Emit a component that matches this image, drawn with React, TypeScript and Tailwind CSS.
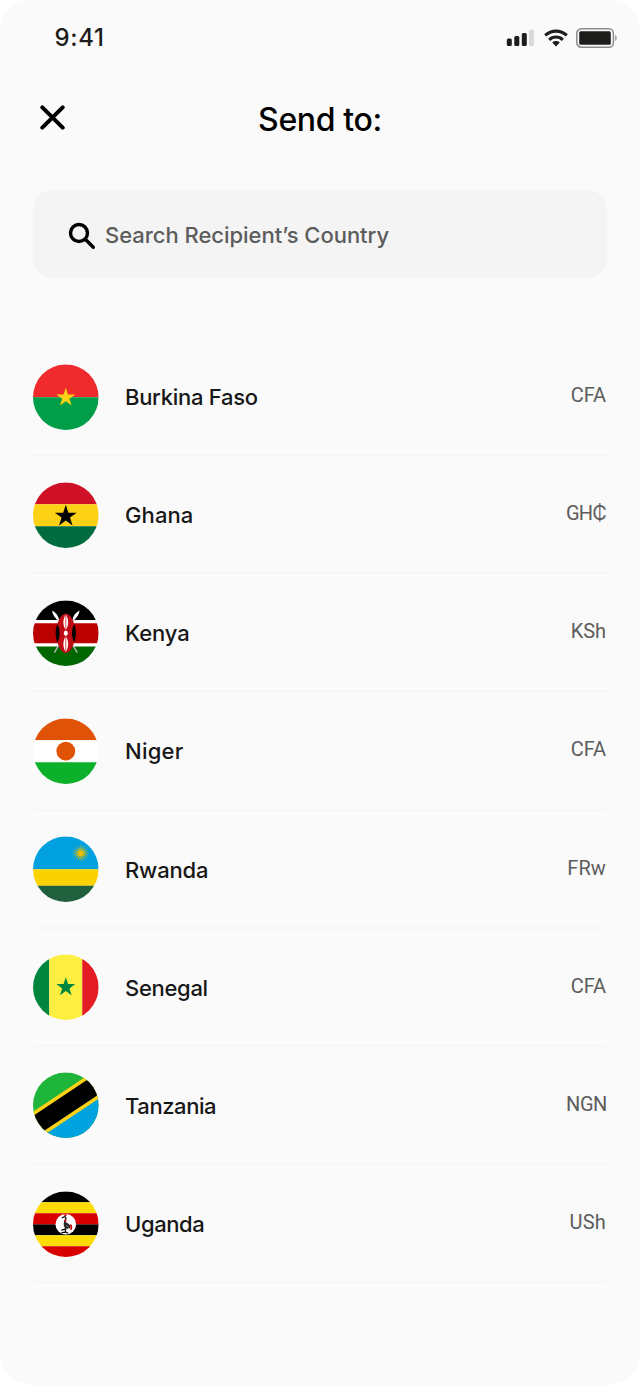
import { useId, type ReactNode } from "react";

const STAR =
  "M0-10 2.245-3.09H9.511L3.633 1.18 5.878 8.09 0 3.82-5.878 8.09-3.633 1.18-9.511-3.09H-2.245Z";

function Flag({ children }: { children: ReactNode }) {
  const id = useId();

  return (
    <svg className="w-[66px] h-[66px] shrink-0" viewBox="0.2 -0.2 66 66">
      <clipPath id={id}>
        <circle cx="33" cy="33" r="32.8" />
      </clipPath>
      <g clipPath={`url(#${id})`}>{children}</g>
    </svg>
  );
}

const countries = [
  {
    name: "Burkina Faso",
    currency: "CFA",
    nameClass: "tracking-[-0.28px]",
    currencyClass: "tracking-[-0.1px]",
    flag: (
      <>
        <path fill="#ef2b2d" d="M0 0h66v33H0z" />
        <path fill="#009e49" d="M0 33h66v33H0z" />
        <path fill="#fcd116" transform="translate(33 33.3)" d={STAR} />
      </>
    ),
  },
  {
    name: "Ghana",
    currency: "GH₵",
    nameClass: "tracking-[0.1px]",
    currencyClass: "tracking-[-0.8px]",
    flag: (
      <>
        <path fill="#ce1126" d="M0 0h66v22H0z" />
        <path fill="#fcd116" d="M0 22h66v22H0z" />
        <path fill="#006b3f" d="M0 44h66v22H0z" />
        <path fill="#000" transform="translate(33 34) scale(1.15)" d={STAR} />
      </>
    ),
  },
  {
    name: "Kenya",
    currency: "KSh",
    nameClass: "tracking-[-0.1px]",
    currencyClass: "tracking-[-0.1px]",
    flag: (
      <>
        <path fill="#fff" d="M0 0h66v66H0z" />
        <path fill="#000" d="M0 0h66v19.8H0z" />
        <path fill="#b00" d="M0 23h66v20H0z" />
        <path fill="#060" d="M0 46.2h66V66H0z" />
        {/* spears */}
        <path stroke="#bbb" strokeWidth="1.3" d="M22 15 44.5 52.5M44 15 21.5 52.5" />
        <path
          fill="#fff"
          d="M19.3 10.5c3.5 1.2 6.5 5.2 7 9.5-3.5-1.2-6.5-5.2-7-9.5ZM46.7 10.5c-3.5 1.2-6.5 5.2-7 9.5 3.5-1.2 6.5-5.2 7-9.5Z"
        />
        {/* shield */}
        <path
          fill="#c00a14"
          d="M33 13.3c5 0 9.5 9.5 9.5 19.7s-4.5 19.7-9.5 19.7-9.5-9.5-9.5-19.7 4.5-19.7 9.5-19.7Z"
        />
        <path
          fill="#000"
          d="M24.5 24c3.2 5 3.2 13 0 18-2.2-5-2.2-13 0-18ZM41.5 24c2.2 5 2.2 13 0 18-3.2-5-3.2-13 0-18Z"
        />
        <path
          fill="#fff"
          d="M33 14.3c3.2 4.5 3.2 11 0 15.7-3.2-4.7-3.2-11.2 0-15.7ZM33 36c3.2 4.7 3.2 11.2 0 15.7-3.2-4.5-3.2-11 0-15.7Z"
        />
        <path stroke="#c00a14" strokeWidth="0.7" d="M33 14v38" />
        <ellipse cx="33" cy="33" rx="2" ry="2.7" fill="#fff" />
      </>
    ),
  },
  {
    name: "Niger",
    currency: "CFA",
    nameClass: "tracking-[0.25px]",
    currencyClass: "tracking-[-0.1px]",
    flag: (
      <>
        <path fill="#e05206" d="M0 0h66v22H0z" />
        <path fill="#fff" d="M0 22h66v22H0z" />
        <path fill="#0db02b" d="M0 44h66v22H0z" />
        <circle cx="33" cy="33" r="9.4" fill="#e05206" />
      </>
    ),
  },
  {
    name: "Rwanda",
    currency: "FRw",
    nameClass: "tracking-[-0.15px]",
    currencyClass: "tracking-[0.1px]",
    flag: (
      <>
        <path fill="#00a1de" d="M0 0h66v33H0z" />
        <path fill="#fad201" d="M0 33h66v16.5H0z" />
        <path fill="#20603d" d="M0 49.5h66V66H0z" />
        {/* sun */}
        <circle cx="48" cy="17" r="5.5" fill="#e5be01" fillOpacity="0.35" />
        <path
          stroke="#e5be01"
          strokeWidth="0.8"
          strokeOpacity="0.7"
          d="M48 9v16M40 17h16M42.3 11.3l11.4 11.4M53.7 11.3 42.3 22.7M44.9 9.6l6.2 14.8M51.1 9.6l-6.2 14.8M40.6 13.9l14.8 6.2M40.6 20.1l14.8-6.2"
        />
        <circle cx="48" cy="17" r="3" fill="#e5be01" />
      </>
    ),
  },
  {
    name: "Senegal",
    currency: "CFA",
    nameClass: "tracking-[-0.3px]",
    currencyClass: "tracking-[-0.1px]",
    flag: (
      <>
        <path fill="#00853f" d="M0 0h16.5v66H0z" />
        <path fill="#fdef42" d="M16.5 0h33v66h-33z" />
        <path fill="#e31b23" d="M49.5 0H66v66H49.5z" />
        <path fill="#00853f" transform="translate(33 33)" d={STAR} />
      </>
    ),
  },
  {
    name: "Tanzania",
    currency: "NGN",
    nameClass: "tracking-[-0.42px]",
    currencyClass: "-mr-px tracking-[-0.4px]",
    flag: (
      <>
        <path fill="#1eb53a" d="M0 0h66v66H0z" />
        <path fill="#00a3dd" d="M66 0v66H0z" />
        <path stroke="#fcd116" strokeWidth="25.5" d="M-16.5 66 82.5 0" />
        <path stroke="#000" strokeWidth="18.5" d="M-16.5 66 82.5 0" />
      </>
    ),
  },
  {
    name: "Uganda",
    currency: "USh",
    nameClass: "tracking-[-0.38px]",
    currencyClass: "tracking-[0.2px]",
    flag: (
      <>
        <path fill="#000" d="M0 0h66v11H0zM0 33h66v11H0z" />
        <path fill="#fcdc04" d="M0 11h66v11H0zM0 44h66v11H0z" />
        <path fill="#d90000" d="M0 22h66v11H0zM0 55h66v11H0z" />
        <circle cx="33" cy="33" r="10.3" fill="#fff" />
        {/* crane */}
        <path
          fill="none"
          stroke="#111"
          strokeWidth="1.3"
          strokeLinecap="round"
          d="M29.5 26.5 32 25.5c1.8.5 1 2.5.2 4-.8 1.3-.8 2.5 0 3.5M33 37l-.5 4-3.5.5M33 41l2 .8M32 38l-3 1"
        />
        <path
          fill="#222"
          d="M31.3 30.5c2 .5 5.7 2 6.5 5-.5 2-3 2.5-5 1.5-1.8-1-2.5-4-1.5-6.5Z"
        />
        <path
          fill="none"
          stroke="#d90000"
          strokeWidth="1.7"
          d="M31.5 24h2.3M32.7 28v2.5M37.3 33.5c1.7 1 1.7 3.5.5 5"
        />
        <path stroke="#999" strokeWidth="0.8" d="m33 34 3 2" />
      </>
    ),
  },
];

function StatusBar() {
  return (
    <div className="flex items-center justify-between h-[76px] pl-[54.5px] pr-[22px]">
      <span className="text-2xl font-[550] tracking-[0.7px] text-[#1d1d1b]">
        9:41
      </span>
      <div className="flex items-center">
        <svg className="w-[28px] h-[18px]" viewBox="0 0 28 18" fill="#1d1d1b">
          <rect x="0.8" y="9.5" width="5" height="7.5" rx="1.5" />
          <rect x="8.3" y="7" width="5" height="10" rx="1.5" />
          <rect x="15.8" y="4" width="5" height="13" rx="1.5" />
          <rect x="23" y="0.5" width="5" height="16.5" rx="1.5" fill="#d9dad9" />
        </svg>
        <svg
          className="w-[24px] h-[18px] ml-[10px]"
          viewBox="0 0 24 18"
          fill="none"
          stroke="#1d1d1b"
          strokeWidth="3.1"
        >
          <path d="M1.2 6.4a15.8 15.8 0 0 1 21.6 0M5.2 10.8a9.7 9.7 0 0 1 13.6 0" />
          <path
            fill="#1d1d1b"
            stroke="none"
            d="M8.2 13.6a5.6 5.6 0 0 1 7.6 0L12 17.4Z"
          />
        </svg>
        <svg className="w-[42px] h-[20px] ml-[8px]" viewBox="0 0 42 20">
          <rect
            x="0.8"
            y="0.8"
            width="36.6"
            height="18.4"
            rx="4.5"
            fill="none"
            stroke="#8b8b8a"
            strokeWidth="1.5"
          />
          <rect x="3.2" y="3.2" width="31.6" height="13.6" rx="1.5" fill="#1d1d1b" />
          <path fill="#999" d="M39.2 7c2 .7 2 5.3 0 6Z" />
        </svg>
      </div>
    </div>
  );
}

export default function App() {
  return (
    <div className="bg-white">
      <main className="w-[640px] h-[1385px] overflow-hidden bg-[#fafafa] rounded-[32px] font-['Inter',sans-serif]">
        <StatusBar />

        {/* Header */}
        <header className="grid grid-cols-[1fr_auto_1fr] items-center h-[88px] px-[40px]">
          <button
            type="button"
            aria-label="Close"
            className="w-[25px] h-[25px] -mt-[5px]"
          >
            <svg
              viewBox="0 0 25 25"
              fill="none"
              stroke="#000"
              strokeWidth="4"
              strokeLinecap="round"
            >
              <path d="m2.3 2.3 20.4 20.4M22.7 2.3 2.3 22.7" />
            </svg>
          </button>
          <h1 className="text-[32px] font-[550] tracking-[-0.35px] text-black">
            Send to:
          </h1>
        </header>

        {/* Search */}
        <label className="flex items-center h-[88px] mt-[26px] mx-[33px] pl-[35px] pt-[3px] bg-[#f4f4f4] rounded-[20px]">
          <svg
            className="w-[28px] h-[28px]"
            viewBox="0 0 28 28"
            fill="none"
            stroke="#000"
            strokeWidth="3.4"
          >
            <circle cx="11" cy="11" r="8.5" />
            <path strokeLinecap="round" d="m17.3 17.3 8 8" />
          </svg>
          <span className="ml-[9px] text-[22px] font-[550] tracking-[-0.03px] text-[#5c5c5c] whitespace-nowrap">
            Search Recipient’s Country
          </span>
        </label>

        {/* Countries */}
        <ul className="mt-[60px] mx-[33px]">
          {countries.map((country) => (
            <li
              key={country.name}
              className="flex items-center h-[118.15px] pt-px border-b-2 border-[#f6f6f6]"
            >
              <Flag>{country.flag}</Flag>
              <span
                className={`ml-[26px] mt-[2px] text-[22px] font-[550] text-[#171717] ${country.nameClass}`}
              >
                {country.name}
              </span>
              <div className="ml-auto mr-px mb-[3px] text-xl text-[#5c5c5c] font-['Roboto','Inter',sans-serif]">
                <span className={country.currencyClass}>{country.currency}</span>
              </div>
            </li>
          ))}
        </ul>
      </main>
    </div>
  );
}
